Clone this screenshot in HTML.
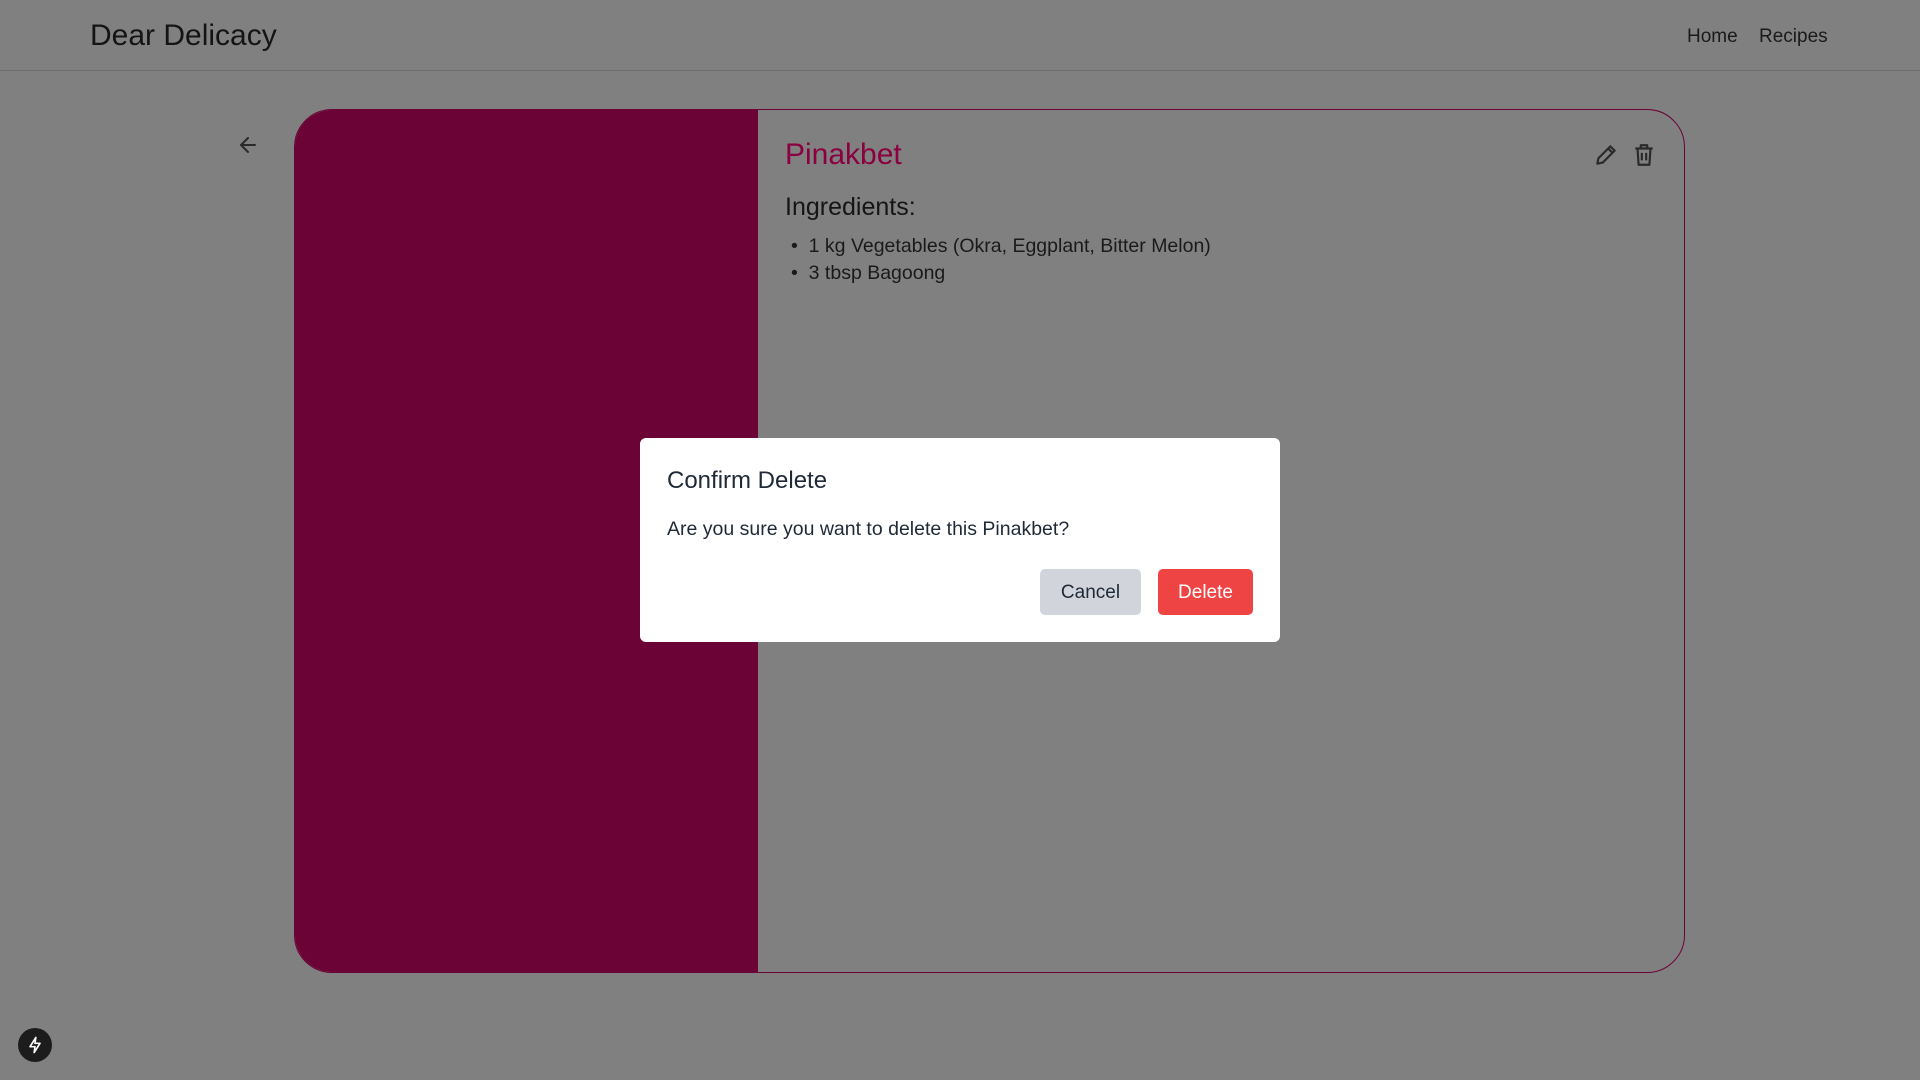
<!DOCTYPE html>
<html><head><meta charset="utf-8"><style>
*{margin:0;padding:0;box-sizing:border-box}
body{width:1920px;height:1080px;background:#808080;font-family:"Liberation Sans",sans-serif;position:relative;overflow:hidden;color:#111}
.hdr{position:absolute;left:0;top:0;width:1920px;height:71px;border-bottom:1px solid #6e6e6e}
.logo{position:absolute;left:90px;top:19px;font-size:30px;color:#141414}
.nav{position:absolute;top:26px;font-size:19px;color:#1a1a1a}
.card{position:absolute;left:294px;top:109px;width:1391px;height:864px;border:1.5px solid #6b0336;border-radius:38px;overflow:hidden}
.left{position:absolute;left:0;top:0;width:463px;height:100%;background:#6b0336}
.abs{position:absolute}
.modal{position:absolute;left:640px;top:438px;width:640px;height:204px;background:#fff;border-radius:6px}
.btn{position:absolute;top:131px;height:46px;border-radius:5px;font-size:19px;text-align:center;line-height:48px}
</style></head><body>
<div class="hdr"><div class="logo">Dear Delicacy</div>
<div class="nav" style="left:1687px">Home</div><div class="nav" style="left:1759px">Recipes</div></div>
<svg class="abs" style="left:236px;top:133px" width="24" height="24" viewBox="0 0 24 24" fill="none" stroke="#2a2a2a" stroke-width="2" stroke-linecap="round" stroke-linejoin="round"><path d="M19 12H5M12 19l-7-7 7-7"/></svg>
<div class="card"><div class="left"></div>
<div class="abs" style="left:490px;top:28px;font-size:30px;color:#8a0040">Pinakbet</div>
<div class="abs" style="left:490px;top:83px;font-size:25px;color:#151515">Ingredients:</div>
<div class="abs" style="left:496px;top:123px;font-size:19.5px;color:#1a1a1a;line-height:27px">• &nbsp;1 kg Vegetables (Okra, Eggplant, Bitter Melon)<br>• &nbsp;3 tbsp Bagoong</div>
<svg class="abs" style="left:1298px;top:32px" width="26" height="26" viewBox="0 0 24 24" fill="none" stroke="#2a2a2a" stroke-width="2" stroke-linejoin="round"><path d="M4 20l1-5L16 4l4 4L9 19z"/><path d="M14 6l4 4"/></svg>
<svg class="abs" style="left:1336px;top:32px" width="26" height="26" viewBox="0 0 24 24" fill="none" stroke="#2a2a2a" stroke-width="2" stroke-linejoin="round"><path d="M4 6h16M9 6V3h6v3M6 6l1 15h10l1-15M10 10v7M14 10v7"/></svg>
</div>
<div class="modal">
<div class="abs" style="left:27px;top:29px;font-size:24px;color:#1f2937">Confirm Delete</div>
<div class="abs" style="left:27px;top:80px;font-size:19.5px;color:#1f2937">Are you sure you want to delete this Pinakbet?</div>
<div class="btn" style="left:400px;width:101px;background:#d1d5db;color:#1f2937">Cancel</div>
<div class="btn" style="left:518px;width:95px;background:#ef4444;color:#fff">Delete</div>
</div>
<div class="abs" style="left:18px;top:1028px;width:34px;height:34px;border-radius:50%;background:#1c1c1c"></div>
<svg class="abs" style="left:25px;top:1035px" width="20" height="20" viewBox="0 0 24 24" fill="none" stroke="#fff" stroke-width="2" stroke-linejoin="round"><path d="M13 3L6 14h6l-1 7 7-11h-6z"/></svg>
</body></html>
